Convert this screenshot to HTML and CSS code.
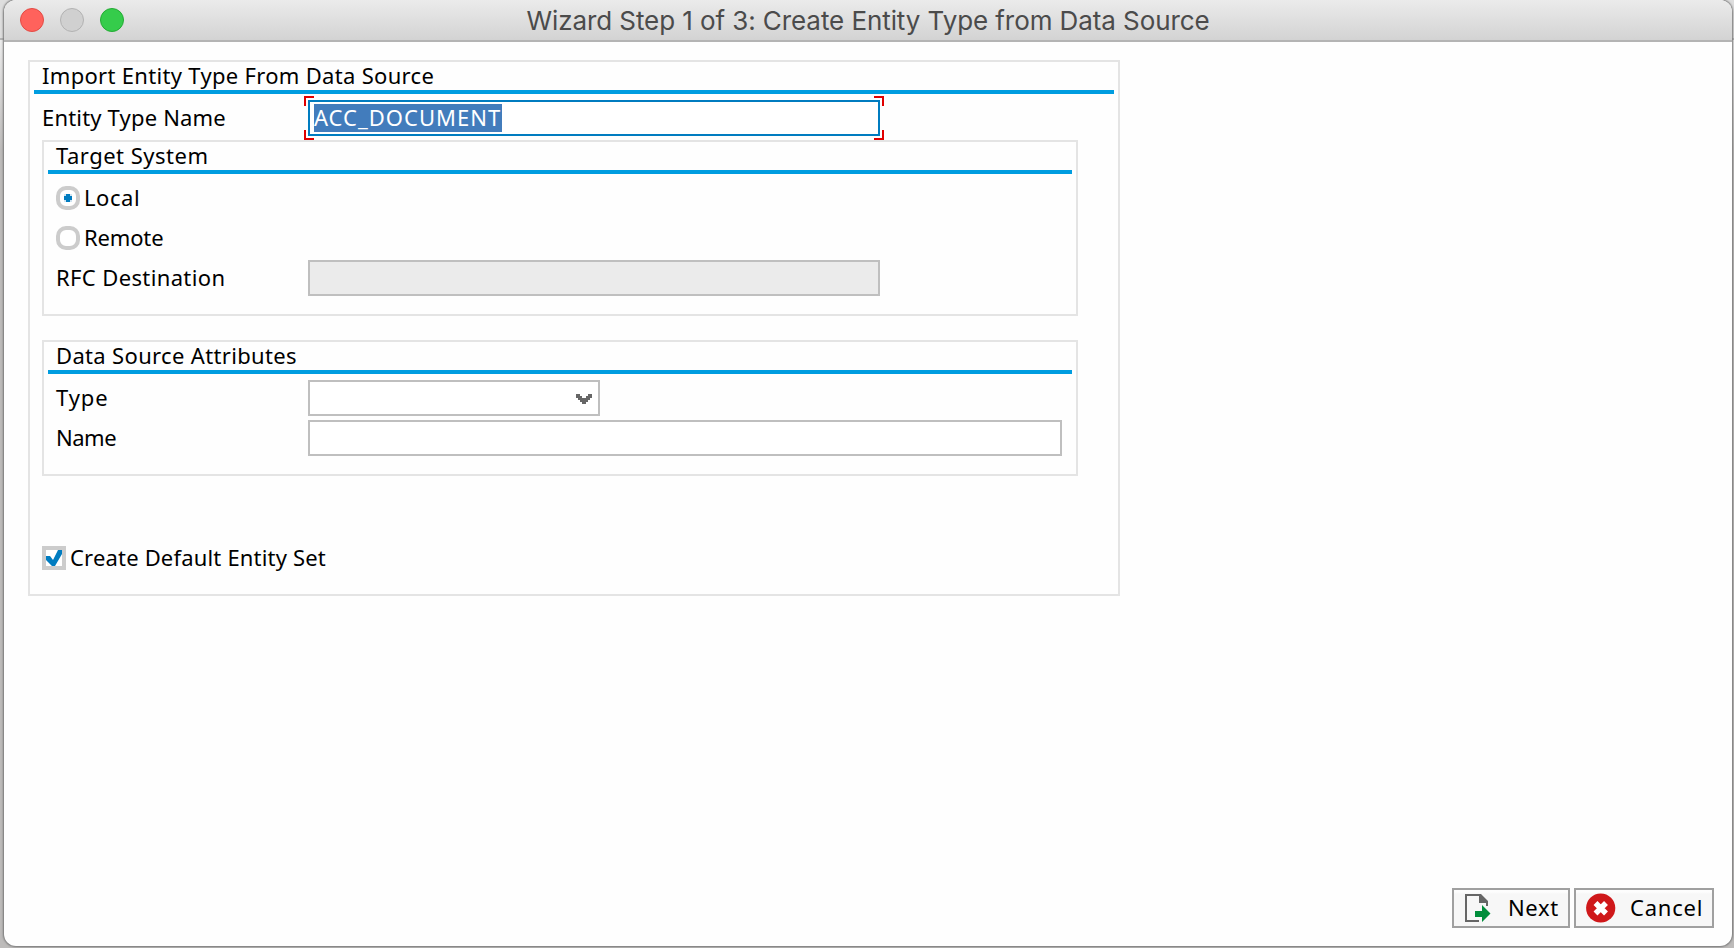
FILE: index.html
```html
<!DOCTYPE html>
<html lang="en">
<head>
<meta charset="utf-8">
<title>Wizard Step 1 of 3</title>
<link rel="stylesheet" href="styles.css">
</head>
<body>
<main class="window">
  <header class="titlebar">
    <div class="lights"><i class="light close"></i><i class="light minimize"></i><i class="light maximize"></i></div>
    <h1 class="title">Wizard Step 1 of 3: Create Entity Type from Data Source</h1>
  </header>
  <section class="content">
    <div class="group outer">
      <h2 class="heading"><span class="t-import">Import Entity Type From Data Source</span></h2>
      <div class="row entity-row">
        <label class="label"><span class="t-entity">Entity Type Name</span></label>
        <div class="field focused">
          <span class="selected">ACC_DOCUMENT</span>
          <i class="corner tl"></i><i class="corner tr"></i><i class="corner bl"></i><i class="corner br"></i>
        </div>
      </div>
      <div class="group inner target">
        <h2 class="heading"><span class="t-target">Target System</span></h2>
        <div class="row first">
          <svg class="control" viewBox="0 0 24 24"><rect class="ring" x="2" y="2" width="20" height="20" rx="8"/><path class="glow" d="M8 8h8v8H8z"/><path class="dot" d="M10 8h4v2h2v4h-2v2h-4v-2H8v-4h2z"/></svg>
          <span class="t-local">Local</span>
        </div>
        <div class="row">
          <svg class="control" viewBox="0 0 24 24"><rect class="ring" x="2" y="2" width="20" height="20" rx="8"/></svg>
          <span class="t-remote">Remote</span>
        </div>
        <div class="row">
          <label class="label"><span class="t-rfc">RFC Destination</span></label>
          <div class="field disabled"></div>
        </div>
      </div>
      <div class="group inner source">
        <h2 class="heading"><span class="t-source">Data Source Attributes</span></h2>
        <div class="row first">
          <label class="label"><span class="t-type">Type</span></label>
          <div class="field select"><svg class="arrow" viewBox="0 0 16 10" shape-rendering="crispEdges"><path d="M0 0h4v2h2v2h4V2h2V0h4v4h-2v2h-2v2h-2v2H6V8H4V6H2V4H0z"/></svg></div>
        </div>
        <div class="row">
          <label class="label"><span class="t-name">Name</span></label>
          <div class="field wide"></div>
        </div>
      </div>
      <div class="row check-row">
        <svg class="control" viewBox="0 0 24 24"><path class="box" d="M2 2h20v20H2z"/><path class="tick" d="M4 10h4l3 4 5-10h4v4l-7 12h-3l-6-6z"/></svg>
        <span class="t-create">Create Default Entity Set</span>
      </div>
    </div>
    <div class="actions">
      <button class="button next"><svg class="icon-next" viewBox="0 0 28 30"><path class="page" d="M15 28H2V2h14"/><path class="page-edge" d="M15 1h2l7 7v5h-2v-3h-7z"/><path class="go" d="M11 18h7v-6l8.5 8.5-8.5 8.5v-5h-7z"/></svg><span class="t-next">Next</span></button>
      <button class="button cancel"><svg class="icon-cancel" viewBox="0 0 30 30"><circle cx="14.7" cy="15" r="14.6"/><path d="M9.5 10l10.5 10.5M20 10L9.500 20.500"/></svg><span class="t-cancel">Cancel</span></button>
    </div>
  </section>
</main>
</body>
</html>
```
FILE: styles.css
```css
* { box-sizing: border-box; }
body { margin: 0; width: 1734px; height: 948px; overflow: hidden; background: linear-gradient(#dedede 0 38px, #b4b4b4 38px 40px, #ececec 40px, #bdbbba 150px); font: 22px/28px "Noto Sans", sans-serif; color: #000; }
.window { height: 946px; margin: 0 2px 0 4px; background: #fefefe; border-radius: 12px; box-shadow: 0 0 2px 1px #777; overflow: hidden; display: flex; flex-direction: column; }
.titlebar { height: 42px; flex: none; display: flex; align-items: center; background: linear-gradient(#ebebeb, #d3d3d3); border-bottom: 2px solid #b4b4b4; }
.lights { display: flex; gap: 16px; padding-left: 16px; width: 200px; }
.light { width: 24px; height: 24px; border-radius: 50%; border: 1px solid; }
.close { background: #ff625c; border-color: #e24b45; }
.minimize { background: #d0d0d0; border-color: #b2b2b2; }
.maximize { background: #35cc4b; border-color: #24ab34; }
.title { flex: 1; margin: 0 200px 0 0; padding-top: 2px; text-align: center; font: 400 26px/38px Inter, sans-serif; letter-spacing: -0.08px; color: #4b4b4b; white-space: nowrap; }
.content { flex: 1; display: flex; flex-direction: column; justify-content: space-between; padding: 18px 18px 18px 24px; }
.group { border: 2px solid #e4e4e4; }
.outer { width: 1092px; height: 536px; padding: 0 4px; }
.heading { margin: 0; height: 32px; padding-left: 8px; font-size: 22px; font-weight: 400; line-height: 26px; border-bottom: 4px solid #009de0; white-space: nowrap; }
.row { display: flex; align-items: center; height: 36px; margin-top: 4px; padding-left: 8px; white-space: nowrap; }
.row span { padding-bottom: 2px; }
.first { margin-top: 6px; }
.label { width: 252px; flex: none; }
.label span { display: block; }
.entity-row { margin-top: 6px; }
.entity-row .label { width: 266px; }
.field { position: relative; width: 572px; height: 36px; border: 2px solid #bfbfbf; background: #fff; }
.focused { border-color: #007cc0; padding: 2px 4px; }
.disabled { background: #ebebeb; }
.select { width: 292px; display: flex; justify-content: flex-end; align-items: center; padding: 2px 6px 0 0; }
.wide { width: 754px; }
.arrow { width: 16px; height: 10px; fill: #666; }
.selected { display: block; width: 188px; height: 28px; line-height: 26px; background: #427cbc; color: #fff; letter-spacing: 1px; }
.corner { position: absolute; width: 10px; height: 10px; border: 0 solid #e00000; z-index: 1; }
.tl { left: -6px; top: -6px; border-width: 2px 0 0 2px; }
.tr { right: -6px; top: -6px; border-width: 2px 2px 0 0; }
.bl { left: -6px; bottom: -6px; border-width: 0 0 2px 2px; }
.br { right: -6px; bottom: -6px; border-width: 0 2px 2px 0; }
.inner { width: 1036px; margin: 4px 0 0 8px; padding: 0 4px; }
.target { height: 176px; }
.source { height: 136px; margin-top: 24px; }
.control { width: 24px; height: 24px; flex: none; margin-right: 4px; }
.ring, .box { fill: #fff; stroke: #ccc; stroke-width: 4; }
.glow { fill: #cfe4f2; }
.dot, .tick { fill: #007cc0; }
.check-row { margin-top: 64px; }
.actions { display: flex; justify-content: flex-end; gap: 4px; }
.button { height: 40px; display: flex; align-items: center; border: 2px solid #a0a0a0; background: linear-gradient(#fdfdfd 0 2px, #f7f7f7 4px); font: inherit; color: inherit; padding: 0 0 0 10px; }
.button span { padding-bottom: 2px; }
.next { width: 118px; }
.cancel { width: 140px; }
.icon-next { width: 28px; height: 30px; flex: none; margin-right: 16px; }
.icon-cancel { width: 30px; height: 30px; flex: none; margin-right: 14px; }
.page { fill: none; stroke: #666; stroke-width: 2; }
.page-edge { fill: #666; }
.go { fill: #008d3b; }
.icon-cancel circle { fill: #cf181a; }
.icon-cancel path { fill: none; stroke: #fff; stroke-width: 5.5; }
.t-import { letter-spacing: 0.31px; }
.t-entity, .t-create { letter-spacing: 0.18px; }
.t-target { letter-spacing: 0.5px; }
.t-local { letter-spacing: 0.55px; }
.t-remote { letter-spacing: -0.15px; }
.t-rfc { letter-spacing: 0.37px; }
.t-source { letter-spacing: 0.34px; }
.t-type { letter-spacing: 0.9px; }
.t-name { letter-spacing: -0.5px; }
.t-next { letter-spacing: 0.6px; }
.t-cancel { letter-spacing: 0.8px; }
```
